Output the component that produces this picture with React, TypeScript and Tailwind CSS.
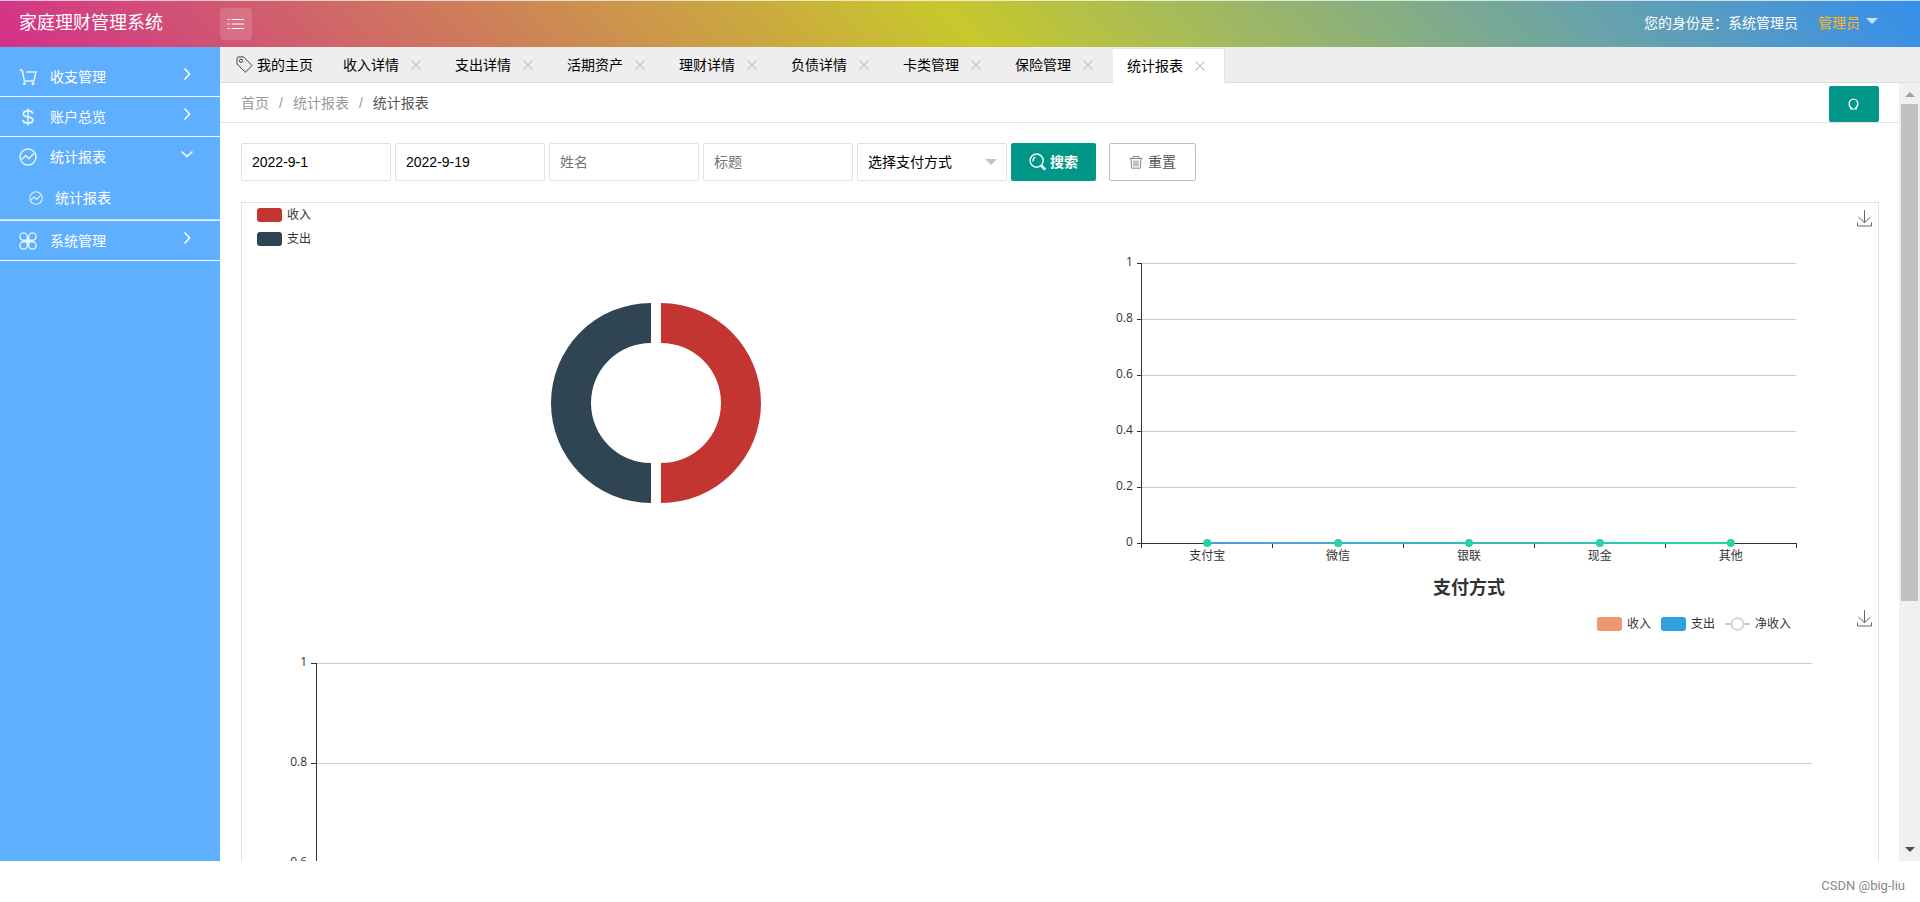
import React from 'react';

const sansFont = 'font-["Liberation_Sans","Noto_Sans_CJK_SC",sans-serif]';

const tabs = ['收入详情', '支出详情', '活期资产', '理财详情', '负债详情', '卡类管理', '保险管理', '统计报表'];

function CartIcon() {
    return (
        <svg className="w-[18px] h-[18px]" viewBox="0 0 18 18" fill="none" stroke="currentColor" strokeWidth="1.4">
            <path d="M.8 1.5 3.400 2.800 5.400 13h9.400L17 4H7.500" />
            <circle cx="5.300" cy="15.400" r="1.500" fill="currentColor" stroke="none" />
            <circle cx="14" cy="15.400" r="1.500" fill="currentColor" stroke="none" />
        </svg>
    );
}

function DollarIcon() {
    return (
        <svg className="w-[18px] h-[18px]" viewBox="0 0 18 18" fill="none" stroke="currentColor" strokeWidth="1.8">
            <path d="M13.600 5.800C13.400 3.800 11.600 2.900 9 2.900S4.400 4 4.400 5.900c0 4.300 9.500 1.800 9.500 6.200 0 2-2 3-4.900 3s-4.900-1-5-3.200" />
            <path d="M9 .5v17" strokeWidth="1.4" />
        </svg>
    );
}

function ChartIcon({ className }: { className: string }) {
    return (
        <svg className={className} viewBox="0 0 18 18" fill="none" stroke="currentColor" strokeWidth="1.4">
            <circle cx="9" cy="9" r="8" />
            <path d="M2.500 11.500 6.800 7.600l3 3.200 5.200-5.200" strokeLinejoin="round" />
        </svg>
    );
}

function CloverIcon() {
    return (
        <svg className="w-[18px] h-[18px]" viewBox="0 0 18 18" fill="none" stroke="currentColor" strokeWidth="1.4">
            <path d="M8.300 8.300H4.500A3.700 3.700 0 1 1 8.300 4.500zM9.700 8.300V4.500A3.700 3.700 0 1 1 13.500 8.300zM8.300 9.700V13.500A3.700 3.700 0 1 1 4.500 9.700zM9.700 9.700H13.500A3.700 3.700 0 1 1 9.700 13.500z" />
            <rect x="7" y="7" width="4" height="4" fill="currentColor" stroke="none" />
        </svg>
    );
}

function Chevron({ open }: { open?: boolean }) {
    return (
        <svg className="w-3 h-3" viewBox="0 0 12 12" fill="none" stroke="currentColor" strokeWidth="1.5">
            <path d={open ? 'M.5 3.500l5.500 5 5.500-5' : 'M3.500.5l5 5.500-5 5.500'} />
        </svg>
    );
}

function DownloadIcon() {
    return (
        <svg className="w-[15px] h-[17px]" viewBox="0 0 15 17" fill="none" stroke="#666" strokeWidth="1">
            <path d="M7.500 0v12.500M1.500 7l6 5.700 6-5.700M.5 12.500v3.500h14v-3.500" />
        </svg>
    );
}

const menu = [
    { icon: <CartIcon />, label: '收支管理' },
    { icon: <DollarIcon />, label: '账户总览' },
    { icon: <ChartIcon className="w-[18px] h-[18px]" />, label: '统计报表', children: ['统计报表'] },
    { icon: <CloverIcon />, label: '系统管理' },
];

function Header() {
    return (
        <header className="h-[47px] shrink-0 flex items-center border-t border-white/70 text-white bg-[linear-gradient(45deg,#d4308a_0%,#c8c82c_50%,#358eee_100%)]">
            <h1 className="w-[220px] pl-[19px] pb-[2px] text-lg leading-6">家庭理财管理系统</h1>
            <button aria-label="菜单" className="w-8 h-8 rounded-sm bg-white/15 flex items-center justify-center">
                <svg className="w-[18px] h-3" viewBox="0 0 18 12" fill="none" stroke="currentColor" strokeWidth="1">
                    <path d="M4.500 1.500H17M4.500 6H17M4.500 10.500H17" />
                    <path d="M.5 1.500h2M.5 6h2M.5 10.500h2" />
                </svg>
            </button>
            <div className="ml-auto pr-[42px] pb-[2px] flex items-center text-sm">
                <span>您的身份是：系统管理员</span>
                <button className="ml-5 flex items-center gap-[6px] text-[#ffb71c]">
                    管理员
                    <span className="mb-1 border-x-6 border-t-6 border-x-transparent border-t-[#c4e6fb]" />
                </button>
            </div>
        </header>
    );
}

function Sidebar() {
    return (
        <nav className="w-[220px] shrink-0 bg-[#5fafff] text-white text-sm pt-[10px]">
            {menu.map((item) => (
                <div key={item.label} className="border-b border-white/90">
                    <a href="#" className="h-[39px] pl-[19px] pr-[27px] flex items-center">
                        <span className="text-[#e2f6ff]">{item.icon}</span>
                        <span className="ml-[13px]">{item.label}</span>
                        <span className="ml-auto pb-[6px]"><Chevron open={!!item.children} /></span>
                    </a>
                    {item.children?.map((child) => (
                        <a key={child} href="#" className="h-[44px] pl-[29px] flex items-center border-b border-white/60">
                            <span className="text-[#e2f6ff]"><ChartIcon className="w-[14px] h-[14px]" /></span>
                            <span className="ml-3">{child}</span>
                        </a>
                    ))}
                </div>
            ))}
        </nav>
    );
}

function TabBar() {
    return (
        <div className="h-9 shrink-0 flex items-end bg-[#eeeeef] border-b border-[#dedede] text-sm text-black">
            <a href="#" className="h-[35px] px-4 flex items-center gap-1">
                <svg className="w-[17px] h-[17px]" viewBox="0 0 17 17" fill="none" stroke="#444" strokeWidth="1">
                    <path d="M1 2.200 1.800 1 7.500.8 16 9.500l-6.500 6.800L1 8z" strokeLinejoin="round" />
                    <circle cx="5" cy="4.800" r="1.600" />
                </svg>
                我的主页
            </a>
            {tabs.map((tab, i) => (
                <div
                    key={tab}
                    className={`h-[35px] w-28 pl-[14px] flex items-center shrink-0 ${i === tabs.length - 1 ? '-mb-px bg-white border-r border-t border-[#e6e6e6]' : ''}`}
                >
                    <a href="#">{tab}</a>
                    <button aria-label={`关闭${tab}`} className="ml-3">
                        <svg className="w-[10px] h-[10px]" viewBox="0 0 10 10" stroke="#c8c8c8" strokeWidth="1.200">
                            <path d="M.5.5l9 9M9.500.5l-9 9" />
                        </svg>
                    </button>
                </div>
            ))}
        </div>
    );
}

function Breadcrumb() {
    return (
        <div className="h-10 pl-[21px] pr-5 flex items-center border-b border-[#e2e2e2] text-sm text-[#999]">
            <a href="#">首页</a>
            <span className="mx-[10px]">/</span>
            <a href="#">统计报表</a>
            <span className="mx-[10px]">/</span>
            <span className="text-[#555]">统计报表</span>
            <button aria-label="刷新" className="ml-auto mt-[3px] w-[50px] h-9 rounded-xs bg-[#009688] text-white flex items-center justify-center">
                <svg className="w-3 h-3" viewBox="0 0 12 12" fill="none" stroke="currentColor" strokeWidth="1.400">
                    <path d="M2 10.800H4.200C2.200 9.600 1.200 8 1.200 6A4.300 4.900 0 0 1 9.800 6C9.800 8 8.800 9.600 6.800 10.800H9" />
                </svg>
            </button>
        </div>
    );
}

function SearchForm() {
    const inputClass = 'w-[150px] h-[38px] px-[10px] border border-[#e2e2e2] rounded-xs text-sm text-black placeholder:text-[#757575] outline-none';
    return (
        <form className="flex items-center gap-1 pt-5 pb-[21px]">
            <input aria-label="开始日期" className={inputClass} defaultValue="2022-9-1" />
            <input aria-label="结束日期" className={inputClass} defaultValue="2022-9-19" />
            <input aria-label="姓名" className={inputClass} placeholder="姓名" />
            <input aria-label="标题" className={inputClass} placeholder="标题" />
            <div className="relative">
                <select aria-label="支付方式" className={`${inputClass} appearance-none`}>
                    <option>选择支付方式</option>
                </select>
                <span className="absolute right-[10px] top-4 border-x-6 border-t-6 border-x-transparent border-t-[#c2c2c2] pointer-events-none" />
            </div>
            <button type="button" className="w-[85px] h-[38px] rounded-xs bg-[#009688] text-white text-sm font-bold flex items-center justify-center gap-[3px]">
                <svg className="w-[18px] h-[18px]" viewBox="0 0 18 18" fill="none" stroke="currentColor" strokeWidth="1.400">
                    <circle cx="7.600" cy="7.600" r="6.600" />
                    <path d="M4.300 8.500A3.700 3.700 0 0 1 6.500 4.200" />
                    <path d="M12.300 12.800l4 3.700" strokeWidth="2.600" />
                </svg>
                搜索
            </button>
            <button type="button" className="ml-[9px] w-[87px] h-[38px] rounded-xs border border-[#c0c0c0] text-[#555] text-sm flex items-center justify-center gap-[5px]">
                <svg className="w-[14px] h-[14px]" viewBox="0 0 14 14" fill="none" stroke="#888" strokeWidth="1">
                    <path d="M.5 3.500h13M4 3.500v-2h6v2M2 3.500l.7 9.700h8.600l.7-9.700M5 5.500v6M7 5.500v6M9 5.500v6" />
                </svg>
                重置
            </button>
        </form>
    );
}

function LegendItem({ color, label }: { color: string; label: string }) {
    return (
        <span className="flex items-center gap-[5px]">
            <svg className="w-[25px] h-[14px]" viewBox="0 0 25 14">
                <rect width="25" height="14" rx="3" fill={color} />
            </svg>
            {label}
        </span>
    );
}

function PieChart() {
    return (
        <div className="h-[400px] relative text-xs text-[#333]">
            <div className="absolute left-[15px] top-[3px] flex flex-col gap-[6px] leading-[18px]">
                <LegendItem color="#c23531" label="收入" />
                <LegendItem color="#2f4554" label="支出" />
            </div>
            <svg className="w-full h-full">
                <svg x="50%" y="200" overflow="visible">
                    <path d="M10-100A100 100 0 0 1 10 100V60A60 60 0 0 0 10-60z" fill="#c23531" />
                    <path d="M0 100A100 100 0 0 1 0-100V-60A60 60 0 0 0 0 60z" fill="#2f4554" />
                </svg>
            </svg>
        </div>
    );
}

const axisFont = 'font-["Open_Sans","Noto_Sans_CJK_SC",sans-serif]';

// horizontal grid lines with their tick marks and labels, from 1 down to 0
function ValueAxis({ step }: { step: number }) {
    return (
        <g className={axisFont} fontSize="12">
            {['1', '0.8', '0.6', '0.4', '0.2', '0'].map((label, i) => (
                <g key={label}>
                    {label !== '0' && <line x1="0" x2="100%" y1={i * step} y2={i * step} stroke="#ccc" shapeRendering="crispEdges" />}
                    <line x1="-5" x2="0" y1={i * step} y2={i * step} stroke="#333" shapeRendering="crispEdges" />
                    <text x="-9" y={i * step + 3} textAnchor="end" fill="#333">{label}</text>
                </g>
            ))}
            <line x1="0" x2="0" y1="0" y2={step * 5} stroke="#333" shapeRendering="crispEdges" />
        </g>
    );
}

function PayChart() {
    const names = ['支付宝', '微信', '银联', '现金', '其他'];
    return (
        <svg className="w-full h-[400px]">
            <defs>
                <linearGradient id="payLine" gradientUnits="userSpaceOnUse" x1="0" x2="100%" y1="0" y2="0">
                    <stop offset="0.1" stopColor="#4a9fd8" />
                    <stop offset="0.7" stopColor="#27d3a2" />
                </linearGradient>
            </defs>
            <svg x="10%" y="60" width="80%" height="280" overflow="visible">
                <ValueAxis step={56} />
                <line x1="0" x2="100%" y1="280" y2="280" stroke="#333" shapeRendering="crispEdges" />
                {[0, 20, 40, 60, 80, 100].map((p) => (
                    <line key={p} x1={`${p}%`} x2={`${p}%`} y1="280" y2="285" stroke="#333" shapeRendering="crispEdges" />
                ))}
                <line x1="10%" x2="90%" y1="280" y2="280" stroke="url(#payLine)" strokeWidth="2" />
                {names.map((name, i) => (
                    <g key={name}>
                        <circle cx={`${10 + i * 20}%`} cy="280" r="4" fill="#27d3a2" />
                        <text x={`${10 + i * 20}%`} y="297" fontSize="12" textAnchor="middle" fill="#333">{name}</text>
                    </g>
                ))}
                <text x="50%" y="331" fontSize="18" fontWeight="bold" textAnchor="middle" fill="#333">支付方式</text>
            </svg>
        </svg>
    );
}

function IncomeChart() {
    return (
        <div className="relative">
            <div className="absolute right-[87px] top-3 flex gap-[10px] text-xs leading-[18px] text-[#333]">
                <LegendItem color="#ec9771" label="收入" />
                <LegendItem color="#2ea0dd" label="支出" />
                <span className="flex items-center gap-[5px]">
                    <svg className="w-[25px] h-[14px]" viewBox="0 0 25 14" stroke="#ccc" fill="none">
                        <path d="M0 7h6M19 7h6" strokeWidth="2" />
                        <circle cx="12.500" cy="7" r="6" strokeWidth="1.500" />
                    </svg>
                    净收入
                </span>
            </div>
            <div className="absolute right-[6px] top-[7px]"><DownloadIcon /></div>
            <div className="pl-[74px] pr-[66px] pt-[60px]">
                <svg className="block w-full h-[500px] overflow-visible">
                    <ValueAxis step={100} />
                </svg>
            </div>
        </div>
    );
}

// thin native-looking scrollbar for the report frame
function Scrollbar() {
    return (
        <div className="w-[21px] shrink-0 bg-[#f0f0f0] flex flex-col items-center">
            <span className="mt-[9px] border-x-5 border-b-5 border-x-transparent border-b-[#a0a0a0]" />
            <div className="mt-[7px] w-[17px] h-[497px] bg-[#c1c1c1]" />
            <span className="mt-auto mb-[9px] border-x-5 border-t-5 border-x-transparent border-t-[#505050]" />
        </div>
    );
}

export default function App() {
    return (
        <div className={`h-screen flex flex-col bg-white ${sansFont}`}>
            <Header />
            <div className="flex-1 min-h-0 flex">
                <Sidebar />
                <div className="flex-1 min-w-0 flex flex-col">
                    <TabBar />
                    <div className="flex-1 min-h-0 flex">
                        <main className="flex-1 min-w-0 overflow-hidden">
                            <Breadcrumb />
                            <div className="pl-[21px] pr-5">
                                <SearchForm />
                                <section className="border border-[#e2e2e2] relative">
                                    <div className="absolute right-[6px] top-[7px]"><DownloadIcon /></div>
                                    <div className="grid grid-cols-2">
                                        <PieChart />
                                        <PayChart />
                                    </div>
                                    <IncomeChart />
                                </section>
                            </div>
                        </main>
                        <Scrollbar />
                    </div>
                </div>
            </div>
            <footer className="h-[41px] shrink-0 pr-[15px] flex items-center justify-end pt-2 text-[13px] text-[#888] font-[Roboto,sans-serif]">
                CSDN @big-liu
            </footer>
        </div>
    );
}
